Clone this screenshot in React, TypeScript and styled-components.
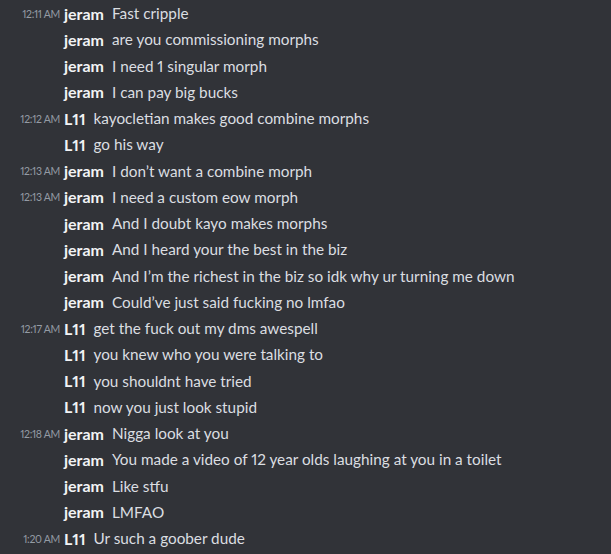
import styled, { createGlobalStyle } from 'styled-components'

interface Message {
  time?: string
  author: string
  text: string
}

const messages: Message[] = [
  { time: '12:11 AM', author: 'jeram', text: 'Fast cripple' },
  { author: 'jeram', text: 'are you commissioning morphs' },
  { author: 'jeram', text: 'I need 1 singular morph' },
  { author: 'jeram', text: 'I can pay big bucks' },
  { time: '12:12 AM', author: 'L11', text: 'kayocletian makes good combine morphs' },
  { author: 'L11', text: 'go his way' },
  { time: '12:13 AM', author: 'jeram', text: 'I don\u2019t want a combine morph' },
  { time: '12:13 AM', author: 'jeram', text: 'I need a custom eow morph' },
  { author: 'jeram', text: 'And I doubt kayo makes morphs' },
  { author: 'jeram', text: 'And I heard your the best in the biz' },
  { author: 'jeram', text: 'And I\u2019m the richest in the biz so idk why ur turning me down' },
  { author: 'jeram', text: 'Could\u2019ve just said fucking no lmfao' },
  { time: '12:17 AM', author: 'L11', text: 'get the fuck out my dms awespell' },
  { author: 'L11', text: 'you knew who you were talking to' },
  { author: 'L11', text: 'you shouldnt have tried' },
  { author: 'L11', text: 'now you just look stupid' },
  { time: '12:18 AM', author: 'jeram', text: 'Nigga look at you' },
  { author: 'jeram', text: 'You made a video of 12 year olds laughing at you in a toilet' },
  { author: 'jeram', text: 'Like stfu' },
  { author: 'jeram', text: 'LMFAO' },
  { time: '1:20 AM', author: 'L11', text: 'Ur such a goober dude' },
]

const GlobalStyle = createGlobalStyle`
  html, body {
    margin: 0;
    background: #313338;
  }
  body {
    font-family: Lato, "Noto Sans", sans-serif;
    font-variant-numeric: proportional-nums;
    -webkit-font-smoothing: antialiased;
  }
`

const Chat = styled.div`
  display: flex;
  flex-direction: column;
  width: 611px;
  height: 554px;
  overflow: hidden;
  background: #313338;
`

const Row = styled.div`
  display: flex;
  align-items: center;
  height: 26.25px;
  flex-shrink: 0;
  white-space: nowrap;
`

const Time = styled.span`
  width: 60px;
  margin-right: 4px;
  text-align: right;
  font-size: 10.5px;
  color: #949ba4;
  letter-spacing: -0.3px;
  flex-shrink: 0;
  padding-top: 1px;
`

const Author = styled.span`
  font-size: 16px;
  font-weight: 700;
  color: #f2f3f5;
  margin-right: 8px;
`

const Text = styled.span`
  font-size: 15.3px;
  color: #dbdee1;
`

export default function App() {
  return (
    <>
      <GlobalStyle />
      <Chat>
        {messages.map((m, i) => (
          <Row key={i}>
            <Time>{m.time ?? ''}</Time>
            <Author>{m.author}</Author>
            <Text>{m.text}</Text>
          </Row>
        ))}
      </Chat>
    </>
  )
}
